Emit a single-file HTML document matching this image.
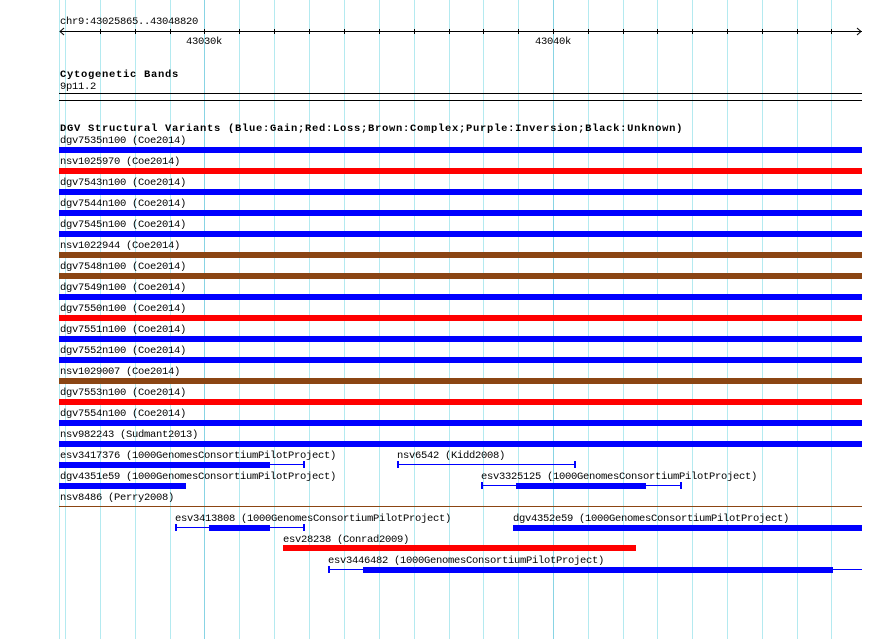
<!DOCTYPE html>
<html><head><meta charset="utf-8"><style>
html,body{margin:0;padding:0;background:#fff;width:890px;height:639px;overflow:hidden}
svg{display:block}
text{font-family:"Liberation Mono","DejaVu Sans Mono",monospace;font-size:10.5px;letter-spacing:-0.3px;fill:#000}
.b{font-weight:bold;font-size:10.5px;letter-spacing:0.7px}
</style></head><body>
<svg width="890" height="639" xmlns="http://www.w3.org/2000/svg">
<g stroke="#b4eaf0" stroke-width="1">
<line x1="59.5" y1="0" x2="59.5" y2="639"/>
<line x1="65.5" y1="0" x2="65.5" y2="639"/>
<line x1="100.5" y1="0" x2="100.5" y2="639"/>
<line x1="135.5" y1="0" x2="135.5" y2="639"/>
<line x1="170.5" y1="0" x2="170.5" y2="639"/>
<line x1="239.5" y1="0" x2="239.5" y2="639"/>
<line x1="274.5" y1="0" x2="274.5" y2="639"/>
<line x1="309.5" y1="0" x2="309.5" y2="639"/>
<line x1="344.5" y1="0" x2="344.5" y2="639"/>
<line x1="379.5" y1="0" x2="379.5" y2="639"/>
<line x1="414.5" y1="0" x2="414.5" y2="639"/>
<line x1="449.5" y1="0" x2="449.5" y2="639"/>
<line x1="483.5" y1="0" x2="483.5" y2="639"/>
<line x1="518.5" y1="0" x2="518.5" y2="639"/>
<line x1="588.5" y1="0" x2="588.5" y2="639"/>
<line x1="623.5" y1="0" x2="623.5" y2="639"/>
<line x1="657.5" y1="0" x2="657.5" y2="639"/>
<line x1="692.5" y1="0" x2="692.5" y2="639"/>
<line x1="727.5" y1="0" x2="727.5" y2="639"/>
<line x1="762.5" y1="0" x2="762.5" y2="639"/>
<line x1="797.5" y1="0" x2="797.5" y2="639"/>
<line x1="831.5" y1="0" x2="831.5" y2="639"/>
</g>
<g stroke="#88d4e4"><line x1="204.5" y1="0" x2="204.5" y2="639"/><line x1="553.5" y1="0" x2="553.5" y2="639"/></g>

<text x="60" y="24">chr9:43025865..43048820</text>
<g stroke="#000" stroke-width="1" fill="none">
<line x1="60" y1="31.5" x2="862" y2="31.5"/>
<polyline points="64,28 60,31.5 64,35"/>
<polyline points="857,28 861,31.5 857,35"/>
<path d="M100.5 29v5M135.5 29v5M170.5 29v5M204.5 29v5M239.5 29v5M274.5 29v5M309.5 29v5M344.5 29v5M379.5 29v5M414.5 29v5M449.5 29v5M483.5 29v5M518.5 29v5M553.5 29v5M588.5 29v5M623.5 29v5M657.5 29v5M692.5 29v5M727.5 29v5M762.5 29v5M797.5 29v5M831.5 29v5"/>
</g>
<text x="186" y="44">43030k</text>
<text x="535" y="44">43040k</text>

<text class="b" x="60" y="77">Cytogenetic Bands</text>
<text x="60" y="89">9p11.2</text>
<rect x="59" y="93" width="803" height="1" fill="#000"/>
<rect x="59" y="100" width="803" height="1" fill="#000"/>

<text class="b" x="60" y="131">DGV Structural Variants (Blue:Gain;Red:Loss;Brown:Complex;Purple:Inversion;Black:Unknown)</text>

<text x="60" y="143">dgv7535n100 (Coe2014)</text><rect x="59" y="147" width="803" height="6" fill="#0000ff"/>
<text x="60" y="164">nsv1025970 (Coe2014)</text><rect x="59" y="168" width="803" height="6" fill="#ff0000"/>
<text x="60" y="185">dgv7543n100 (Coe2014)</text><rect x="59" y="189" width="803" height="6" fill="#0000ff"/>
<text x="60" y="206">dgv7544n100 (Coe2014)</text><rect x="59" y="210" width="803" height="6" fill="#0000ff"/>
<text x="60" y="227">dgv7545n100 (Coe2014)</text><rect x="59" y="231" width="803" height="6" fill="#0000ff"/>
<text x="60" y="248">nsv1022944 (Coe2014)</text><rect x="59" y="252" width="803" height="6" fill="#8b4513"/>
<text x="60" y="269">dgv7548n100 (Coe2014)</text><rect x="59" y="273" width="803" height="6" fill="#8b4513"/>
<text x="60" y="290">dgv7549n100 (Coe2014)</text><rect x="59" y="294" width="803" height="6" fill="#0000ff"/>
<text x="60" y="311">dgv7550n100 (Coe2014)</text><rect x="59" y="315" width="803" height="6" fill="#ff0000"/>
<text x="60" y="332">dgv7551n100 (Coe2014)</text><rect x="59" y="336" width="803" height="6" fill="#0000ff"/>
<text x="60" y="353">dgv7552n100 (Coe2014)</text><rect x="59" y="357" width="803" height="6" fill="#0000ff"/>
<text x="60" y="374">nsv1029007 (Coe2014)</text><rect x="59" y="378" width="803" height="6" fill="#8b4513"/>
<text x="60" y="395">dgv7553n100 (Coe2014)</text><rect x="59" y="399" width="803" height="6" fill="#ff0000"/>
<text x="60" y="416">dgv7554n100 (Coe2014)</text><rect x="59" y="420" width="803" height="6" fill="#0000ff"/>
<text x="60" y="437">nsv982243 (Sudmant2013)</text><rect x="59" y="441" width="803" height="6" fill="#0000ff"/>

<text x="60" y="458">esv3417376 (1000GenomesConsortiumPilotProject)</text>
<rect x="59" y="462" width="211" height="6" fill="#0000ff"/>
<rect x="270" y="464" width="34" height="1" fill="#0000ff"/><rect x="303" y="461" width="2" height="7" fill="#0000ff"/>
<text x="397" y="458">nsv6542 (Kidd2008)</text>
<rect x="397" y="464" width="178" height="1" fill="#0000ff"/><rect x="397" y="461" width="2" height="7" fill="#0000ff"/><rect x="574" y="461" width="2" height="7" fill="#0000ff"/>

<text x="60" y="479">dgv4351e59 (1000GenomesConsortiumPilotProject)</text>
<rect x="59" y="483" width="127" height="6" fill="#0000ff"/>
<text x="481" y="479">esv3325125 (1000GenomesConsortiumPilotProject)</text>
<rect x="481" y="485" width="200" height="1" fill="#0000ff"/><rect x="481" y="482" width="2" height="7" fill="#0000ff"/><rect x="680" y="482" width="2" height="7" fill="#0000ff"/>
<rect x="516" y="483" width="130" height="6" fill="#0000ff"/>

<text x="60" y="500">nsv8486 (Perry2008)</text>
<rect x="59" y="506" width="803" height="1" fill="#8b4513"/>

<text x="175" y="521">esv3413808 (1000GenomesConsortiumPilotProject)</text>
<rect x="175" y="527" width="129" height="1" fill="#0000ff"/><rect x="175" y="524" width="2" height="7" fill="#0000ff"/><rect x="303" y="524" width="2" height="7" fill="#0000ff"/>
<rect x="209" y="525" width="61" height="6" fill="#0000ff"/>
<text x="513" y="521">dgv4352e59 (1000GenomesConsortiumPilotProject)</text>
<rect x="513" y="525" width="349" height="6" fill="#0000ff"/>

<text x="283" y="542">esv28238 (Conrad2009)</text>
<rect x="283" y="545" width="353" height="6" fill="#ff0000"/>

<text x="328" y="563">esv3446482 (1000GenomesConsortiumPilotProject)</text>
<rect x="328" y="569" width="534" height="1" fill="#0000ff"/><rect x="328" y="566" width="2" height="7" fill="#0000ff"/>
<rect x="363" y="567" width="470" height="6" fill="#0000ff"/>
</svg>
</body></html>
